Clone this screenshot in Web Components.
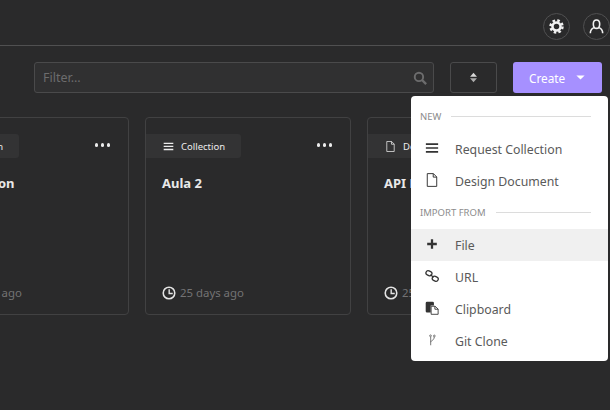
<!DOCTYPE html>
<html>
<head>
<meta charset="utf-8">
<title>Dashboard</title>
<style>
  html, body { margin: 0; height: 100%; background: #2a2a2b; overflow: hidden; }
  body { font-family: "Noto Sans", "Open Sans", sans-serif; font-size: 12px; color: #e6e6e6; }
</style>
</head>
<body>
<app-shell>
  <top-bar></top-bar>
  <tool-bar></tool-bar>
  <card-grid>
    <work-card kind="collection" tag="Collection" age="25 days ago">Integration</work-card>
    <work-card kind="collection" tag="Collection" age="25 days ago">Aula 2</work-card>
    <work-card kind="document" tag="Document" age="25 days ago">API Project</work-card>
  </card-grid>
</app-shell>

<script>
// all the icons in one place, drawn on a 16x16 box
const icons = {
  bars: '<path fill="currentColor" d="M1 2.600h14v1.900H1zM1 7h14v1.900H1zM1 11.400h14v1.900H1z"/>',
  file: '<path fill="none" stroke="currentColor" stroke-width="1.100" d="M2.600 .7h7L13.400 4.500v10.800H2.600zM9.400 .7v4H13.400"/>',
  plus: '<path fill="currentColor" d="M6.700 2.500h2.600v4.200h4.200v2.600H9.300v4.200H6.700V9.300H2.500V6.700h4.200z"/>',
  link: '<g fill="none" stroke="currentColor" stroke-width="1.500"><rect x="1" y="2.400" width="7" height="5" rx="2.500" transform="rotate(25 4.500 4.900)"/><rect x="8.200" y="8.600" width="7" height="5" rx="2.500" transform="rotate(25 11.700 11.100)"/><path d="M6 6.600l4 2.800"/></g>',
  paste: '<path fill="currentColor" d="M.8 2.300Q.8 .8 2.300 .8h6.400Q10.200 .8 10.200 2.300V5H6.500V13.200H2.300Q.8 13.200 .8 11.700z"/><path fill="none" stroke="currentColor" stroke-width="1" d="M7 6h4.500L15 9.200v6H7zM11.300 6v3.400H15"/>',
  git: '<g fill="none" stroke="#666" stroke-width="1"><path d="M6.500 4.500V14M6.500 10.500C6.500 8.500 10.500 8.800 10.500 4.500"/><circle cx="6.300" cy="3.200" r="1"/><circle cx="10.700" cy="3.400" r="1"/></g>',
  clock: '<circle cx="8" cy="8" r="6.600" fill="none" stroke="currentColor" stroke-width="1.800"/><path fill="none" stroke="currentColor" stroke-width="1.600" d="M8.200 3.800v4.700H12.300"/>',
  search: '<circle cx="6.800" cy="6.800" r="4.800" fill="none" stroke="currentColor" stroke-width="2.200"/><path stroke="currentColor" stroke-width="2.600" d="M10.200 10.200l4.800 4.800"/>',
  sort: '<path fill="currentColor" d="M8 1L13 7H3z"/><path fill="currentColor" opacity=".75" d="M8 15L3 9h10z"/>',
  caret: '<path fill="currentColor" d="M2 5h12L8 11z"/>',
  gear: '<circle cx="8" cy="8" r="4.300" fill="none" stroke="currentColor" stroke-width="2.700"/><circle cx="8" cy="8" r="6.400" fill="none" stroke="currentColor" stroke-width="2.600" stroke-dasharray="2.700 2.330"/>',
  user: '<g fill="none" stroke="currentColor" stroke-width="1.700"><path d="M8 1C5.800 1 4.600 2.700 4.600 5.200S5.800 10 8 10s3.400-2.300 3.400-4.800S10.200 1 8 1z"/><path d="M1.400 15.200C1.400 11.800 3 10.200 5.300 9.200M14.600 15.200C14.600 11.800 13 10.200 10.700 9.200"/></g>'
};

function svg(name, size) {
  return `<svg width="${size}" height="${size}" viewBox="0 0 16 16" style="display:block;flex:none">${icons[name]}</svg>`;
}

class AppShell extends HTMLElement {
  constructor() {
    super();
    this.attachShadow({ mode: 'open' }).innerHTML = `
      <style>
        :host { display: block; width: 610px; height: 410px; overflow: hidden; }
      </style>
      <slot></slot>`;
  }
}

class TopBar extends HTMLElement {
  constructor() {
    super();
    this.attachShadow({ mode: 'open' }).innerHTML = `
      <style>
        :host {
          display: flex; justify-content: flex-end; align-items: center; gap: 13px;
          box-sizing: border-box; height: 46px; padding: 13px 0 5px;
          border-bottom: 1px solid #505051;
        }
        .round {
          width: 27px; height: 27px; box-sizing: border-box;
          border: 1px solid #505051; border-radius: 50%;
          display: flex; align-items: center; justify-content: center; color: #f2f2f2;
        }
      </style>
      <div class="round">${svg('gear', 15)}</div>
      <div class="round">${svg('user', 15)}</div>`;
  }
}

class ToolBar extends HTMLElement {
  constructor() {
    super();
    this.attachShadow({ mode: 'open' }).innerHTML = `
      <style>
        :host {
          display: flex; gap: 16px; height: 31px;
          padding: 16px 8px 0 34px;
        }
        .filter {
          width: 400px; box-sizing: border-box; padding: 0 6px 0 8px;
          display: flex; align-items: center; justify-content: space-between;
          background: #303031; border: 1px solid #4a4a4b; border-radius: 3px;
          color: #6c6c6d; font-size: 12.500px;
        }
        .sort {
          width: 47px; box-sizing: border-box; display: flex; align-items: center; justify-content: center;
          border: 1px solid #4a4a4b; border-radius: 3px; color: #d8d8d8;
        }
        .wrap { position: relative; }
        .create {
          width: 89px; height: 31px; box-sizing: border-box; padding-left: 16px;
          display: flex; align-items: center; gap: 10px;
          background: #a690ff; border-radius: 3px; color: #fff; font-size: 11.800px;
        }
        create-menu { position: absolute; top: 34px; right: -6px; }
      </style>
      <div class="filter"><span>Filter...</span>${svg('search', 14)}</div>
      <div class="sort">${svg('sort', 11)}</div>
      <div class="wrap">
        <div class="create"><span>Create</span>${svg('caret', 11)}</div>
        <create-menu></create-menu>
      </div>`;
  }
}

class CardGrid extends HTMLElement {
  constructor() {
    super();
    this.attachShadow({ mode: 'open' }).innerHTML = `
      <style>
        :host {
          display: grid; grid-template-columns: repeat(3, 206px); gap: 16px;
          margin: 24px 0 0 -77px; width: max-content;
        }
      </style>
      <slot></slot>`;
  }
}

class WorkCard extends HTMLElement {
  constructor() {
    super();
    const kind = this.getAttribute('kind') === 'document' ? 'file' : 'bars';
    this.attachShadow({ mode: 'open' }).innerHTML = `
      <style>
        :host {
          display: flex; flex-direction: column; box-sizing: border-box; height: 198px;
          padding-top: 16px; border: 1px solid #414142; border-radius: 4px;
        }
        .head { display: flex; justify-content: space-between; align-items: flex-start; }
        .tag {
          width: 95px; height: 24px; box-sizing: border-box; padding-left: 17px;
          display: flex; align-items: center; gap: 7px;
          background: #333334; border-radius: 0 3px 3px 0;
          font-size: 9.500px; color: #ececec;
        }
        .dots { display: flex; gap: 2.500px; margin: 9px 18px 0 0; }
        .dots i { width: 3.500px; height: 3.500px; border-radius: 50%; background: #ececec; }
        .title { margin: 16px 16px 0; font-weight: 700; font-size: 13px; color: #e8e8e8; line-height: 18px; white-space: nowrap; }
        .foot {
          margin: auto 16px 13px; display: flex; align-items: center; gap: 4px;
          color: #737374; font-size: 11.400px; line-height: 16px; white-space: nowrap;
        }
        .foot svg { color: #e4e4e4; }
      </style>
      <div class="head">
        <div class="tag">${svg(kind, 11)}<span>${this.getAttribute('tag')}</span></div>
        <div class="dots"><i></i><i></i><i></i></div>
      </div>
      <div class="title"><slot></slot></div>
      <div class="foot">${svg('clock', 14)}<span>${this.getAttribute('age')}</span></div>`;
  }
}

class CreateMenu extends HTMLElement {
  constructor() {
    super();
    this.attachShadow({ mode: 'open' }).innerHTML = `
      <style>
        :host {
          display: block; box-sizing: border-box; width: 197px; height: 265px;
          padding: 5px 0 4px; background: #fff; border-radius: 4px;
          color: #5a5a5a; font-size: 12.300px;
        }
      </style>
      <menu-label>NEW</menu-label>
      <menu-row icon="bars">Request Collection</menu-row>
      <menu-row icon="file">Design Document</menu-row>
      <menu-label>IMPORT FROM</menu-label>
      <menu-row icon="plus" active>File</menu-row>
      <menu-row icon="link">URL</menu-row>
      <menu-row icon="paste">Clipboard</menu-row>
      <menu-row icon="git">Git Clone</menu-row>`;
  }
}

class MenuLabel extends HTMLElement {
  constructor() {
    super();
    this.attachShadow({ mode: 'open' }).innerHTML = `
      <style>
        :host {
          display: flex; align-items: center; gap: 10px; height: 32px; box-sizing: border-box;
          padding: 0 17px 2px 9px; font-size: 9.500px; color: #8c8c8c;
        }
        i { flex: 1; height: 1px; background: #dcdcdc; }
      </style>
      <slot></slot><i></i>`;
  }
}

class MenuRow extends HTMLElement {
  constructor() {
    super();
    this.attachShadow({ mode: 'open' }).innerHTML = `
      <style>
        :host {
          display: flex; align-items: center; height: 32px; padding-left: 14px;
        }
        :host([active]) { background: #f0f0f0; }
        .icon { width: 30px; color: #333; margin-top: -2px; }
      </style>
      <div class="icon">${svg(this.getAttribute('icon'), 14)}</div>
      <slot></slot>`;
  }
}

customElements.define('app-shell', AppShell);
customElements.define('top-bar', TopBar);
customElements.define('tool-bar', ToolBar);
customElements.define('card-grid', CardGrid);
customElements.define('work-card', WorkCard);
customElements.define('create-menu', CreateMenu);
customElements.define('menu-label', MenuLabel);
customElements.define('menu-row', MenuRow);
</script>
</body>
</html>
